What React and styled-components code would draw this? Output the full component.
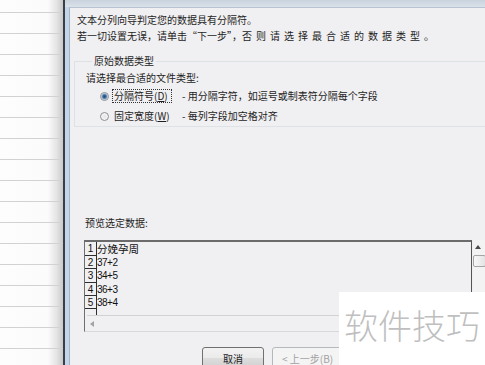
import React from 'react';
import styled, { createGlobalStyle } from 'styled-components';

const Global = createGlobalStyle`
  html, body { margin: 0; padding: 0; background: #fff; overflow: hidden; }
  body { font-family: "Noto Sans CJK SC", "Noto Sans", sans-serif; }
`;

const Screen = styled.div`
  position: relative;
  display: flex;
  width: 485px;
  height: 365px;
  overflow: hidden;
`;

const Sheet = styled.div`
  flex: none;
  width: 63px;
  display: flex;
  flex-direction: column;
  background: linear-gradient(to right, #fdfdfd 0, #fbfbfb 76%, #e4e4e4 90%, #c8c8c8 100%);
`;

const SheetRow = styled.div`
  flex: none;
  box-sizing: border-box;
  height: ${p => (p.$first ? 13 : 21)}px;
  border-bottom: 1px solid #d2d2d2;
`;

const Frame = styled.div`
  flex: 1;
  min-width: 0;
  display: flex;
  flex-direction: column;
  border-left: 2px solid #3b3e44;
  background: #c3d5ea;
  padding-left: 4px;
`;

const TitleStrip = styled.div`
  flex: none;
  height: 7px;
  margin-left: -4px;
  background: linear-gradient(#c9d3de, #d9e1ea);
`;

const Content = styled.div`
  flex: 1;
  display: flex;
  flex-direction: column;
  background: #f0eff1;
  border-left: 1px solid #a6b3c2;
  border-top: 1px solid #b7c3d0;
  padding: 4px 0 0 7px;
  color: #1e1e1e;
  font-size: 10px;
  line-height: 16px;
  white-space: nowrap;
`;

const Intro = styled.div`
  height: 16px;
`;

const Wide = styled.span`
  letter-spacing: ${p => p.$ls}px;
`;

const Group = styled.fieldset`
  margin: 9px 0 0 -3px;
  padding: 1px 0 0 11px;
  border: 1px solid #dde2e6;
  border-right: none;
  min-width: 0;
`;

const Legend = styled.legend`
  padding: 0 2px;
  margin-left: 6px;
  line-height: 16px;
`;

const Hint = styled.div`
  height: 16px;
`;

const RadioRow = styled.div`
  display: flex;
  align-items: center;
  height: 20px;
  padding-left: 14px;
`;

const RadioCircle = styled.span`
  flex: none;
  box-sizing: border-box;
  width: 9px;
  height: 9px;
  border-radius: 50%;
  border: 1px solid #8c8f93;
  background: ${p =>
    p.$checked
      ? 'radial-gradient(circle, #27466b 0, #3d6a99 1.6px, #a9c3dd 3px, #f4f4f4 3.4px)'
      : 'radial-gradient(circle, #e6e6e6 0, #f7f7f7 4px)'};
`;

const OptLabel = styled.span`
  flex: none;
  box-sizing: border-box;
  width: 60px;
  height: 14px;
  line-height: 12px;
  margin-left: 3px;
  padding: 0 1px;
  border: 1px dotted ${p => (p.$focus ? '#333' : 'transparent')};
`;

const Key = styled.span`
  text-decoration: underline;
`;

const Desc = styled.span`
  margin-left: 10px;
`;

const PreviewLabel = styled.div`
  margin: 88px 0 0 8px;
  height: 16px;
  line-height: 16px;
`;

const PreviewRow = styled.div`
  display: flex;
  margin: 9px 0 0 7px;
  height: 92px;
`;

const PreviewBox = styled.div`
  flex: none;
  box-sizing: border-box;
  width: 388px;
  display: flex;
  flex-direction: column;
  border-top: 2px solid #6b6b6b;
  border-left: 1px solid #6f6f6f;
  border-right: 1px solid #555;
  border-bottom: 1px solid #d8d8d8;
`;

const Rows = styled.div`
  flex: none;
  height: 73px;
  display: flex;
`;

const NumCol = styled.div`
  flex: none;
  width: 11px;
  border-right: 1px solid #2e2e2e;
  display: flex;
  flex-direction: column;
`;

const NumCell = styled.div`
  flex: none;
  box-sizing: border-box;
  height: ${p => p.$h}px;
  border-bottom: 1px solid #2e2e2e;
  font-family: "Liberation Sans", Arial, sans-serif;
  font-size: 10px;
  line-height: ${p => p.$h}px;
  text-align: center;
  color: #111;
`;

const DataCol = styled.div`
  flex: 1;
  display: flex;
  flex-direction: column;
`;

const DataCell = styled.div`
  flex: none;
  height: ${p => p.$h}px;
  line-height: ${p => p.$h}px;
  color: #111;
  font-size: ${p => (p.$cjk ? '10.5px' : '10px')};
  font-family: ${p =>
    p.$cjk ? '"Noto Sans CJK SC", sans-serif' : '"Liberation Sans", Arial, sans-serif'};
  letter-spacing: ${p => (p.$cjk ? '0' : '-0.5px')};
`;

const HScroll = styled.div`
  flex: none;
  height: 16px;
  margin-left: 2px;
  border-top: 1px solid #d2d2d2;
  display: flex;
  align-items: center;
  padding-left: 3px;
`;

const ArrowLeft = styled.span`
  width: 0;
  height: 0;
  border-top: 3px solid transparent;
  border-bottom: 3px solid transparent;
  border-right: 4px solid #a3a3a3;
`;

const VScroll = styled.div`
  flex: none;
  width: 16px;
  margin-left: 1px;
  display: flex;
  flex-direction: column;
  align-items: center;
  background: #f3f3f4;
`;

const ArrowUp = styled.span`
  margin-top: 5px;
  width: 0;
  height: 0;
  border-left: 3px solid transparent;
  border-right: 3px solid transparent;
  border-bottom: 4px solid #4a4a4a;
  margin-right: 6px;
`;

const Thumb = styled.span`
  box-sizing: border-box;
  margin-top: 6px;
  width: 13px;
  height: 12px;
  margin-right: 3px;
  border: 1px solid #a5a5a5;
  border-radius: 2px;
  background: linear-gradient(to right, #f7f7f7, #e4e4e4);
`;

const Buttons = styled.div`
  display: flex;
  gap: 8px;
  margin: 15px 0 0 125px;
`;

const Button = styled.button`
  box-sizing: border-box;
  width: ${p => p.$w}px;
  height: 22px;
  padding: 0 0 0 ${p => (p.$disabled ? '9px' : '0')};
  border-radius: 3px;
  font-family: "Noto Sans CJK SC", sans-serif;
  font-size: 10px;
  text-align: ${p => (p.$disabled ? 'left' : 'center')};
  color: ${p => (p.$disabled ? '#a2a2a2' : '#1c1c1c')};
  border: 1px solid ${p => (p.$disabled ? '#b5b9bc' : '#707070')};
  background: ${p =>
    p.$disabled
      ? '#f4f4f4'
      : 'linear-gradient(#f2f2f2 0%, #ebebeb 48%, #dddddd 52%, #d0d0d0 100%)'};
`;

const Watermark = styled.div`
  position: absolute;
  right: 0;
  bottom: 0;
  width: 146px;
  height: 73px;
  box-sizing: border-box;
  background: #fff;
  padding: 13px 0 0 5px;
  font-family: "Noto Sans CJK SC", sans-serif;
  font-weight: 300;
  font-size: 34px;
  line-height: 40px;
  color: #bfbfbf;
  white-space: nowrap;
`;

const rows = [
  { n: '1', t: '分娩孕周', cjk: true, h: 14 },
  { n: '2', t: '37+2', h: 13 },
  { n: '3', t: '34+5', h: 14 },
  { n: '4', t: '36+3', h: 13 },
  { n: '5', t: '38+4', h: 13 },
];

export default function App() {
  return (
    <>
      <Global />
      <Screen>
        <Sheet>
          {Array.from({ length: 18 }).map((_, i) => (
            <SheetRow key={i} $first={i === 0} />
          ))}
        </Sheet>
        <Frame>
          <TitleStrip />
          <Content>
            <Intro>文本分列向导判定您的数据具有分隔符。</Intro>
            <Intro>
              若一切设置无误，请单击“下一步”，<Wide $ls={4}>否则请选择最合适的数据类型。</Wide>
            </Intro>
            <Group>
              <Legend>原始数据类型</Legend>
              <Hint>请选择最合适的文件类型:</Hint>
              <RadioRow>
                <RadioCircle $checked />
                <OptLabel $focus>
                  分隔符号(<Key>D</Key>)
                </OptLabel>
                <Desc>- 用分隔字符，如逗号或制表符分隔每个字段</Desc>
              </RadioRow>
              <RadioRow>
                <RadioCircle />
                <OptLabel>
                  固定宽度(<Key>W</Key>)
                </OptLabel>
                <Desc>- 每列字段加空格对齐</Desc>
              </RadioRow>
            </Group>
            <PreviewLabel>预览选定数据:</PreviewLabel>
            <PreviewRow>
              <PreviewBox>
                <Rows>
                  <NumCol>
                    {rows.map(r => (
                      <NumCell key={r.n} $h={r.h}>
                        {r.n}
                      </NumCell>
                    ))}
                  </NumCol>
                  <DataCol>
                    {rows.map(r => (
                      <DataCell key={r.n} $h={r.h} $cjk={r.cjk}>
                        {r.t}
                      </DataCell>
                    ))}
                  </DataCol>
                </Rows>
                <HScroll>
                  <ArrowLeft />
                </HScroll>
              </PreviewBox>
              <VScroll>
                <ArrowUp />
                <Thumb />
              </VScroll>
            </PreviewRow>
            <Buttons>
              <Button $w={62}>取消</Button>
              <Button $w={72} $disabled>
                &lt; 上一步(B)
              </Button>
            </Buttons>
          </Content>
        </Frame>
        <Watermark>软件技巧</Watermark>
      </Screen>
    </>
  );
}
